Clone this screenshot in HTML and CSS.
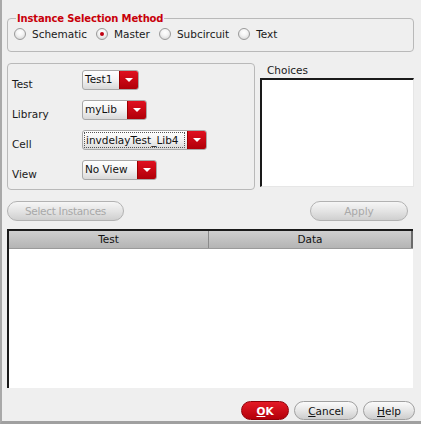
FILE: index.html
```html
<!DOCTYPE html>
<html>
<head>
<meta charset="utf-8">
<link rel="stylesheet" href="styles.css">
</head>
<body>
<div class="win">
  <fieldset class="method">
    <legend>Instance Selection Method</legend>
    <label class="radio"><span class="dot"></span>Schematic</label>
    <label class="radio"><span class="dot on"></span>Master</label>
    <label class="radio"><span class="dot"></span>Subcircuit</label>
    <label class="radio"><span class="dot"></span>Text</label>
  </fieldset>

  <div class="mid">
    <div class="form">
      <div class="row"><span class="lbl">Test</span><span class="combo w1"><span class="val">Test1</span><span class="arrow"></span></span></div>
      <div class="row"><span class="lbl">Library</span><span class="combo w2"><span class="val">myLib</span><span class="arrow"></span></span></div>
      <div class="row"><span class="lbl">Cell</span><span class="combo w3"><span class="val focus">invdelayTest_Lib4</span><span class="arrow"></span></span></div>
      <div class="row"><span class="lbl">View</span><span class="combo w4"><span class="val">No View</span><span class="arrow"></span></span></div>
    </div>
    <div class="choices">
      <div class="clbl">Choices</div>
      <div class="cbox"></div>
    </div>
  </div>

  <div class="actions">
    <button class="btn dis sel">Select Instances</button>
    <button class="btn dis apply">Apply</button>
  </div>

  <div class="table">
    <div class="thead">
      <div class="th c1">Test</div>
      <div class="th c2">Data</div>
    </div>
    <div class="tbody"></div>
  </div>

  <div class="footer">
    <button class="btn ok"><u>O</u>K</button>
    <button class="btn cancel"><u>C</u>ancel</button>
    <button class="btn help"><u>H</u>elp</button>
  </div>
</div>
</body>
</html>
```

FILE: styles.css
```css
html, body {
  margin: 0;
  padding: 0;
}
body {
  width: 421px;
  height: 424px;
  overflow: hidden;
  background: #efefef;
  font-family: "DejaVu Sans", Verdana, sans-serif;
  font-size: 10.5px;
  color: #1a1a1a;
}
.win {
  box-sizing: border-box;
  width: 421px;
  height: 424px;
  border-left: 2px solid #a9a9a9;
  border-bottom: 3px solid #a0a0a0;
  padding: 0 6px 0 5px;
  display: flex;
  flex-direction: column;
}
.method {
  margin: 13px 1px 0 0;
  padding: 4px 0 9px 6px;
  height: 39px;
  box-sizing: border-box;
  border: 1px solid #b9b9b9;
  border-radius: 4px;
  display: flex;
  align-items: center;
}
.method legend {
  padding: 0 1px;
  margin-left: 2px;
  color: #c8000a;
  font-weight: bold;
  font-size: 10px;
  letter-spacing: -0.15px;
}
.radio {
  display: flex;
  align-items: center;
  margin-right: 9px;
}
.dot {
  width: 12px;
  height: 12px;
  box-sizing: border-box;
  border-radius: 50%;
  border: 1px solid #9a9a9a;
  background: radial-gradient(circle at 50% 35%, #ffffff 0%, #f4f4f4 40%, #cfcfcf 100%);
  margin-right: 6px;
  position: relative;
}
.dot.on::after {
  content: "";
  position: absolute;
  left: 3px;
  top: 3px;
  width: 4px;
  height: 4px;
  border-radius: 50%;
  background: #c00010;
}
.mid {
  display: flex;
  margin-top: 11px;
}
.form {
  box-sizing: border-box;
  width: 248px;
  height: 127px;
  border: 1px solid #b9b9b9;
  border-radius: 4px;
  padding: 6px 0 0 4px;
  display: flex;
  flex-direction: column;
  gap: 10px;
}
.row {
  display: flex;
  height: 20px;
}
.lbl {
  width: 70px;
  padding-top: 7px;
  line-height: 14px;
}
.combo {
  display: flex;
  height: 20px;
  box-sizing: border-box;
  border: 1px solid #a8a8a8;
  border-radius: 3px;
  background: linear-gradient(#ffffff, #f2f2f2 50%, #d9d9d9);
  overflow: hidden;
}
.w1 { width: 57px; }
.w2 { width: 65px; }
.w3 { width: 125px; }
.w4 { width: 75px; }
.val {
  flex: 1;
  padding-left: 2px;
  line-height: 17px;
  white-space: nowrap;
  color: #111;
}
.val.focus {
  margin: 1px 2px 1px 1px;
  padding-left: 1px;
  line-height: 15px;
  border: 1px dotted #555;
}
.arrow {
  width: 18px;
  background: linear-gradient(#e01020, #b00008);
  border-left: 1px solid #900;
  position: relative;
}
.arrow::after {
  content: "";
  position: absolute;
  left: 5px;
  top: 7px;
  border-left: 4px solid transparent;
  border-right: 4px solid transparent;
  border-top: 4px solid #fff;
}
.choices {
  margin-left: 5px;
  display: flex;
  flex-direction: column;
}
.clbl {
  padding-left: 7px;
  height: 15px;
  line-height: 14px;
}
.cbox {
  width: 151px;
  height: 106px;
  background: #fff;
  border-top: 2px solid #1a1a1a;
  border-left: 2px solid #1a1a1a;
  border-right: 1px solid #e6e6e6;
  border-bottom: 1px solid #e6e6e6;
}
.btn {
  font-family: "DejaVu Sans", Verdana, sans-serif;
  font-size: 10.5px;
  box-sizing: border-box;
  height: 20px;
  padding: 0;
  border: 1px solid #a0a0a0;
  border-radius: 10px;
  background: linear-gradient(#fbfbfb, #e4e4e4 55%, #cdcdcd);
  color: #111;
}
.btn.dis {
  color: #a8a8a8;
  border-color: #b2b2b2;
  background: linear-gradient(#f6f6f6, #e2e2e2 55%, #cfcfcf);
}
.actions {
  display: flex;
  justify-content: space-between;
  margin-top: 11px;
  padding-right: 7px;
}
.sel { width: 117px; letter-spacing: -0.3px; }
.apply { width: 98px; }
.table {
  margin-top: 8px;
  margin-right: 2px;
  height: 159px;
  box-sizing: border-box;
  background: #fff;
  border-top: 2px solid #1a1a1a;
  border-left: 2px solid #1a1a1a;
  display: flex;
  flex-direction: column;
}
.thead {
  display: flex;
  height: 17px;
  background: linear-gradient(#cfcfcf, #b4b4b4);
  border-bottom: 1px solid #9a9a9a;
}
.th {
  text-align: center;
  line-height: 17px;
  color: #111;
}
.c1 { width: 199px; border-right: 1px solid #8a8a8a; }
.c2 { flex: 1; border-right: 2px solid #6a6a6a; }
.tbody { flex: 1; }
.footer {
  display: flex;
  justify-content: flex-end;
  gap: 5px;
  margin-top: 13px;
  padding-right: 0;
}
.ok {
  width: 48px;
  height: 19px;
  background: linear-gradient(#e41a26, #b4000a);
  border-color: #900008;
  color: #fff;
  font-weight: bold;
}
.cancel { width: 64px; height: 19px; }
.help { width: 52px; height: 19px; }
u { text-decoration-thickness: 1px; text-underline-offset: 1px; }
```
